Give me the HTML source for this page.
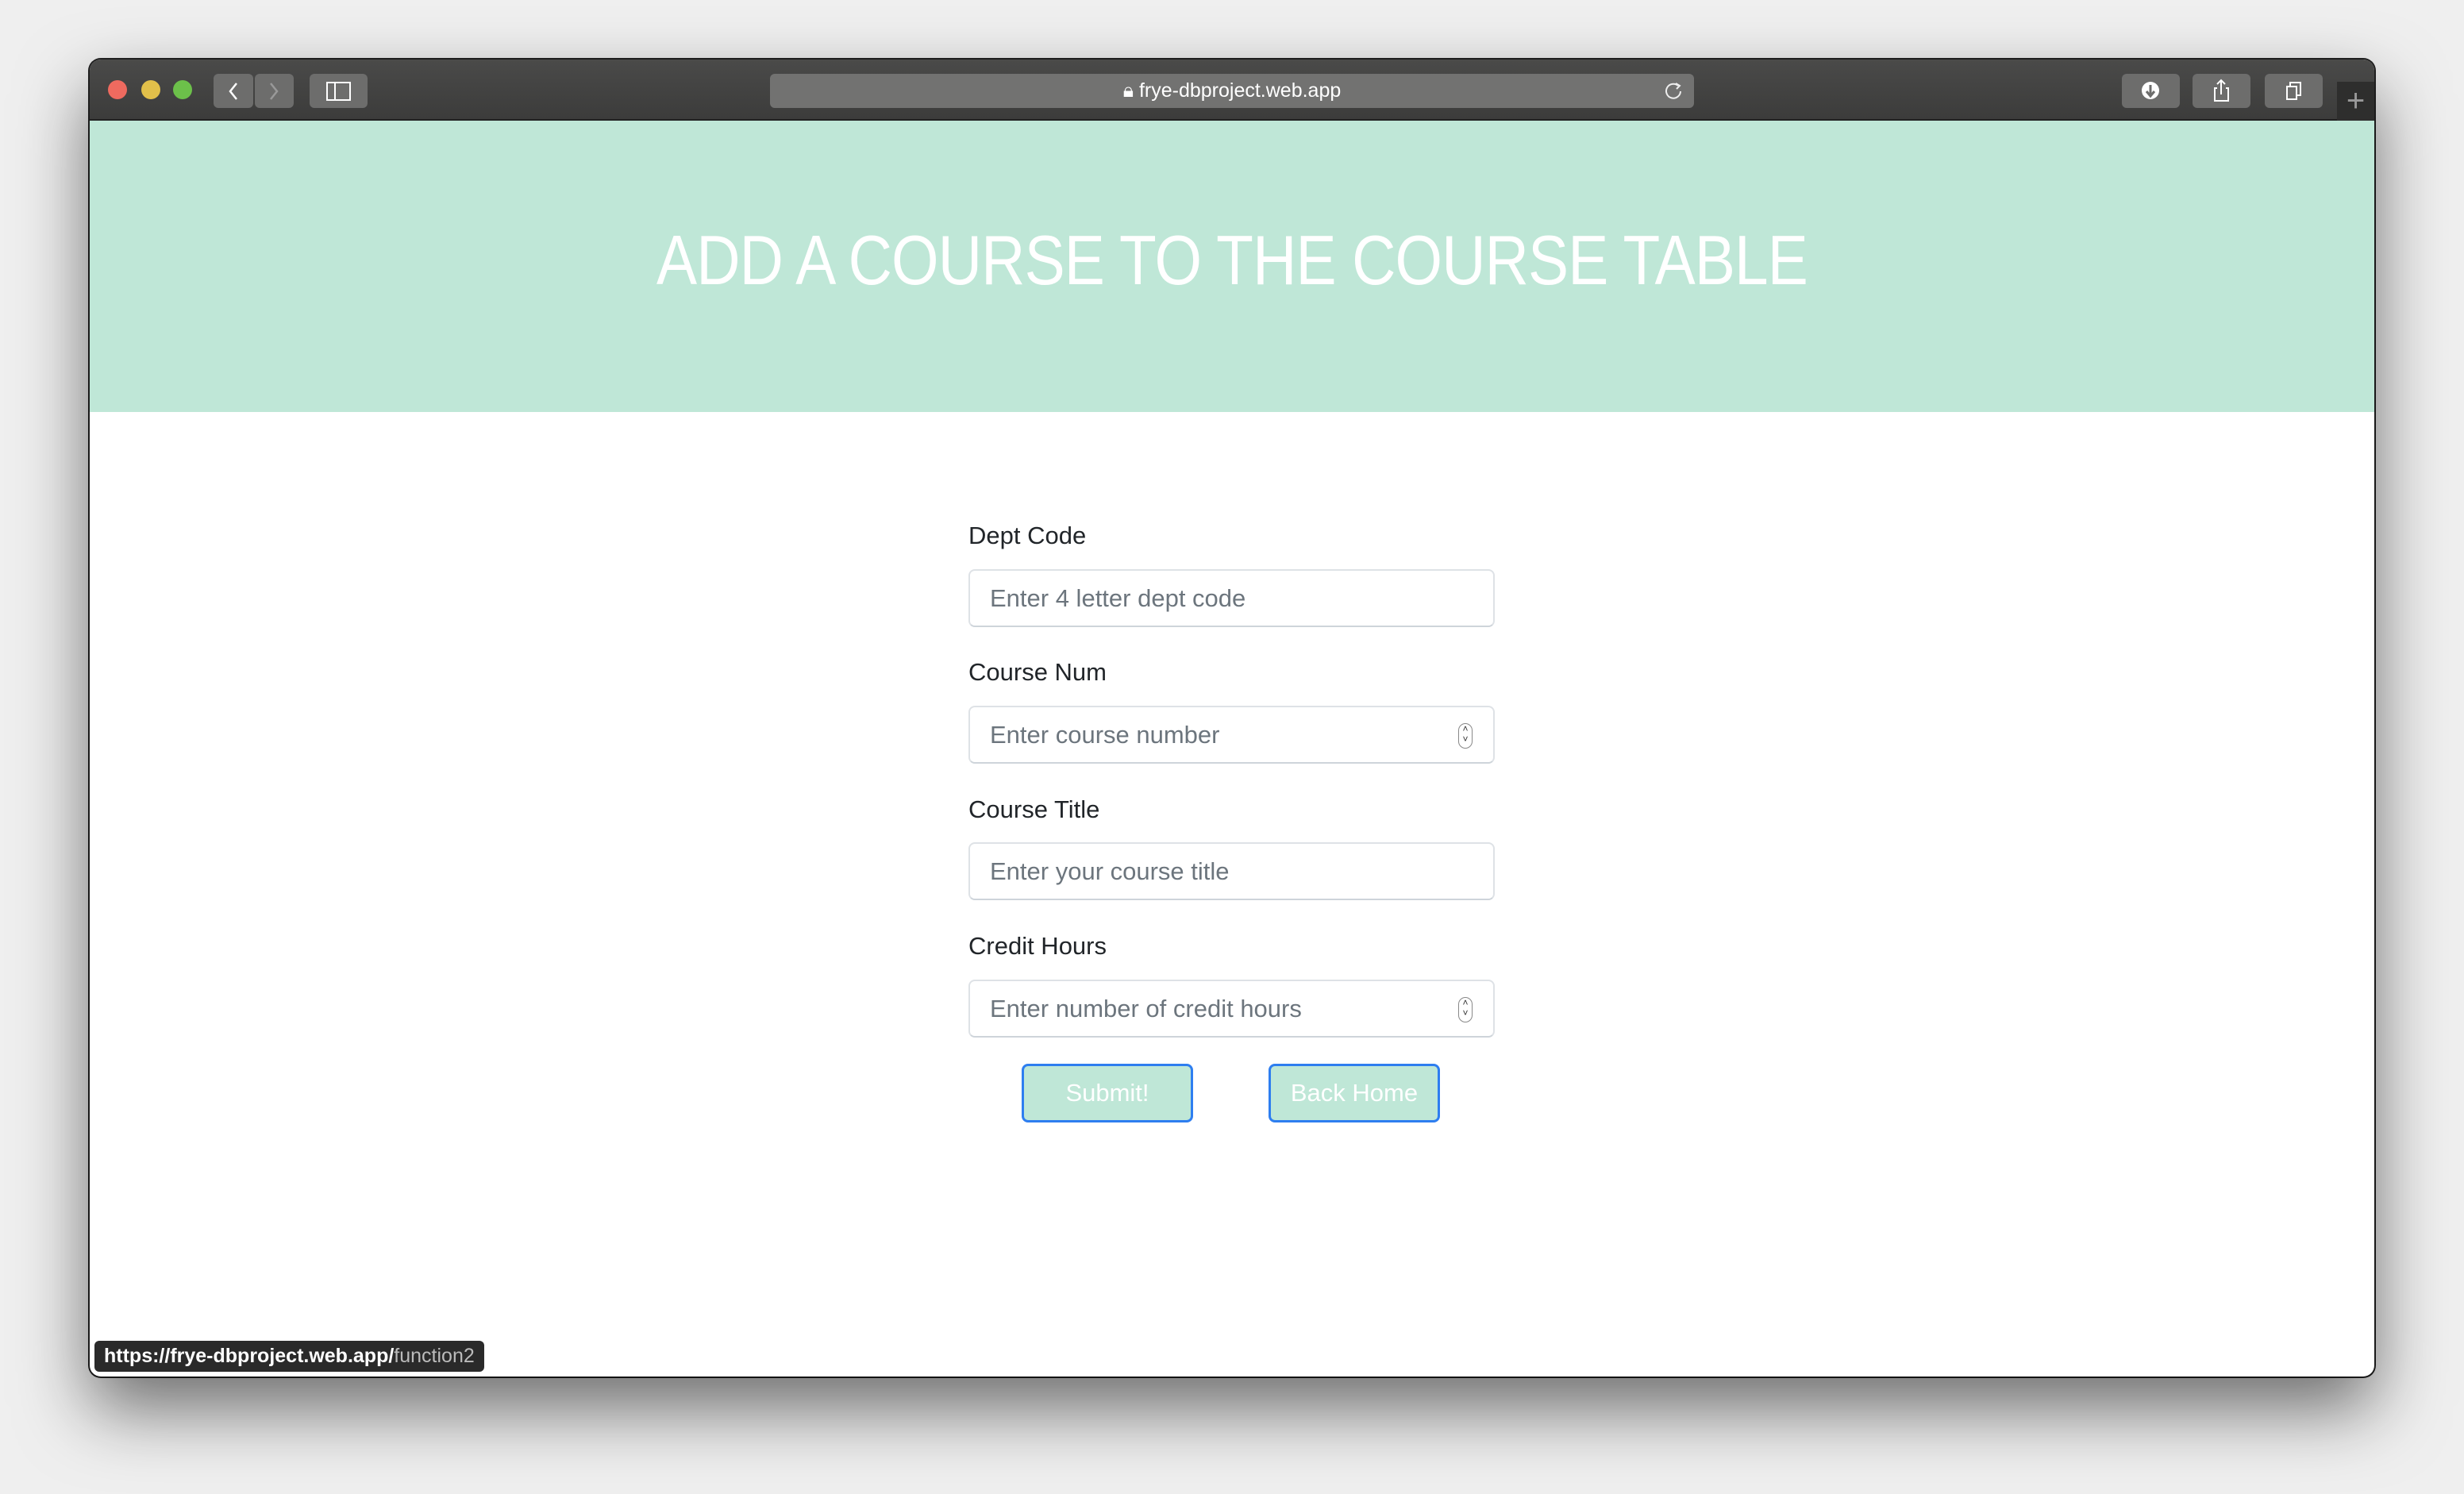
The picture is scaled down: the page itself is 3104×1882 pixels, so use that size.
<!DOCTYPE html>
<html><head><meta charset="utf-8"><style>
*{box-sizing:border-box;margin:0;padding:0}
body{width:3104px;height:1882px;background:#efefef;position:relative;overflow:hidden;font-family:"Liberation Sans",Helvetica,Arial,sans-serif}
.win{position:absolute;left:113px;top:75px;width:2878px;height:1659px;background:#fff;border-radius:14px;overflow:hidden;box-shadow:0 40px 90px rgba(0,0,0,.55),0 0 0 2px #222}
.tb{position:absolute;left:0;top:0;width:100%;height:77px;background:linear-gradient(#4a4a49,#3c3c3b);border-bottom:2px solid #222}
.dot{position:absolute;top:26px;width:24px;height:24px;border-radius:50%}
.btn{position:absolute;top:18px;height:43px;background:#6d6d6c;border-radius:6px}
.hdr{position:absolute;left:0;top:77px;width:100%;height:367px;background:#bfe7d7}
.title{position:absolute;left:0;width:100%;top:126px;text-align:center;color:#fff;font-size:88px;line-height:100px;letter-spacing:-1px;transform:scaleX(0.87)}
.lbl{position:absolute;left:1107px;font-size:31px;color:#212529}
.inp{position:absolute;left:1107px;width:663px;height:73px;border:2px solid #dee2e6;border-bottom-color:#ced4da;border-radius:8px;font-size:31px;color:#6c757d;padding-left:25px;line-height:69px}
.spin{position:absolute;right:26px;top:20px;width:18px;height:32px;border:1.5px solid #888;border-radius:9px;font-size:12px;line-height:13px;text-align:center;color:#333}
.b{position:absolute;top:1265px;width:216px;height:74px;background:#bfe7d7;border:3px solid #2e7ef0;border-radius:8px;color:#fff;font-size:31px;text-align:center;line-height:68px}
.status{position:absolute;left:6px;top:1614px;height:39px;padding:0 12px;background:#2a2a2a;border-radius:6px;color:#fff;font-size:25px;line-height:39px;font-weight:bold}
</style></head><body>
<div class="win">
 <div class="tb">
  <div class="dot" style="left:23px;background:#ee6a5f"></div>
  <div class="dot" style="left:65px;background:#e2c04a"></div>
  <div class="dot" style="left:105px;background:#6cc04a"></div>
  <div class="btn" style="left:156px;width:50px"><svg width="50" height="43"><path d="M29 12 L21 22 L29 32" stroke="#fff" stroke-width="2.5" fill="none"/></svg></div>
  <div class="btn" style="left:208px;width:49px"><svg width="49" height="43"><path d="M20 12 L28 22 L20 32" stroke="#999" stroke-width="2.5" fill="none"/></svg></div>
  <div class="btn" style="left:277px;width:73px"><svg width="73" height="43"><rect x="22" y="11" width="29" height="22" stroke="#fff" stroke-width="2" fill="none"/><line x1="32" y1="11" x2="32" y2="33" stroke="#fff" stroke-width="2"/></svg></div>
  <div class="btn" style="left:857px;width:1164px;background:#727271;color:#fff;font-size:25px;text-align:center;line-height:43px">🔒︎ frye-dbproject.web.app<svg style="position:absolute;right:12px;top:9px" width="26" height="26"><path d="M18 6 A9 9 0 1 0 21 13" stroke="#eee" stroke-width="2" fill="none"/><path d="M15 3 L20 6 L16 10" stroke="#eee" stroke-width="2" fill="none"/></svg></div>
  <div class="btn" style="left:2560px;width:73px"><svg width="73" height="43"><circle cx="36" cy="21" r="11" fill="#fff"/><path d="M36 14 V26 M31 22 L36 28 L41 22" stroke="#6d6d6c" stroke-width="3" fill="none"/></svg></div>
  <div class="btn" style="left:2649px;width:73px"><svg width="73" height="43"><path d="M31 18 H28 V34 H45 V18 H42 M36 8 V26 M31 13 L36 8 L41 13" stroke="#fff" stroke-width="2" fill="none"/></svg></div>
  <div class="btn" style="left:2740px;width:73px"><svg width="73" height="43"><rect x="28" y="16" width="12" height="16" stroke="#fff" stroke-width="2" fill="none"/><path d="M32 16 V11 H45 V27 H40" stroke="#fff" stroke-width="2" fill="none"/></svg></div>
  <div style="position:absolute;left:2831px;top:28px;width:47px;height:49px;background:#2e2e2d;color:#999;font-size:40px;text-align:center;line-height:49px">+</div>
 </div>
 <div class="hdr"><div class="title">ADD A COURSE TO THE COURSE TABLE</div></div>
 <div class="lbl" style="top:582px">Dept Code</div>
 <div class="inp" style="top:642px">Enter 4 letter dept code</div>
 <div class="lbl" style="top:754px">Course Num</div>
 <div class="inp" style="top:814px">Enter course number<div class="spin">˄<br>˅</div></div>
 <div class="lbl" style="top:927px">Course Title</div>
 <div class="inp" style="top:986px">Enter your course title</div>
 <div class="lbl" style="top:1099px">Credit Hours</div>
 <div class="inp" style="top:1159px">Enter number of credit hours<div class="spin">˄<br>˅</div></div>
 <div class="b" style="left:1174px">Submit!</div>
 <div class="b" style="left:1485px">Back Home</div>
 <div class="status">https://frye-dbproject.web.app/<span style="color:#bbb;font-weight:normal">function2</span></div>
</div>
</body></html>
